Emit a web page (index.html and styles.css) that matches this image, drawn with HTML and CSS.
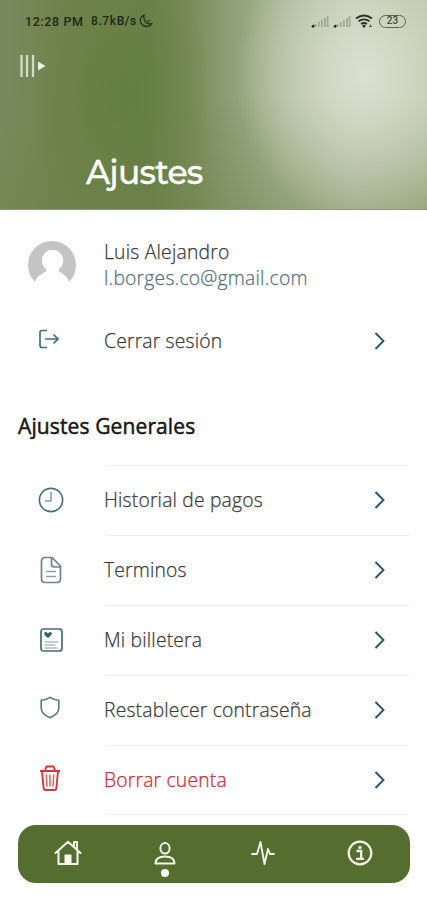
FILE: index.html
```html
<!DOCTYPE html>
<html lang="es">
<head>
<meta charset="utf-8">
<title>Ajustes</title>
<link rel="stylesheet" href="styles.css">
</head>
<body>
<svg width="0" height="0" class="defs">
  <symbol id="chevron" viewBox="0 0 12 18"><path d="M1.5 1l8 8-8 8" fill="none" stroke="#285565" stroke-width="1.9"/></symbol>
  <symbol id="signal" viewBox="0 0 18 13"><path d="M4.7 12V9M7.8 12V7M10.9 12V5M14 12V3M16.6 12V1" fill="none" stroke="#a0ab96" stroke-width="1.8"/><path d="M1 12V11l2-1V12z" fill="#202719" stroke="#202719"/></symbol>
</svg>
<header class="hero">
  <div class="status">
    <span class="time">12:28 PM</span><span class="speed">8.7kB/s</span>
    <svg class="moon" width="14" height="14" viewBox="0 0 14 14"><path d="M5 1C1 3 0 7 3 10.500c3 3 8 2.500 9.500-1C8 11 4 7 5 1z" fill="none" stroke="#23301a" stroke-width="1.300"/><path d="M8 7h3M10 11.500h2.500" stroke="#23301a"/></svg>
    <span class="indicators">
      <svg width="18" height="13"><use href="#signal"/></svg>
      <svg width="18" height="13"><use href="#signal"/></svg>
      <svg width="18" height="14" viewBox="0 0 18 14"><path d="M1 4.500q8-6 16 0M3.500 7.300q5.500-4 11 0M6 10q3-2 6 0" fill="none" stroke="#2b3325" stroke-width="1.800"/><circle cx="9" cy="12" r="1.600" fill="#2b3325"/><path d="M14 12.500h3M15.500 10.500v2" stroke="#59634f"/></svg>
      <span class="battery">23</span>
    </span>
  </div>
  <svg class="menu" width="27" height="24" viewBox="0 0 27 24"><path d="M2.500 1v22M8 1v22M14 1v22" stroke="#d3dcc5" stroke-width="2.300"/><path d="M19 7.500l7.500 4.500-7.500 4.500z" fill="#edf2e4"/></svg>
  <h1>Ajustes</h1>
</header>
<main>
  <section class="profile">
    <svg class="avatar" width="48" height="48" viewBox="0 0 48 48"><circle cx="24" cy="24" r="24" fill="#c4c4c4"/><circle cx="24.500" cy="19.500" r="10.700" fill="#fff"/><path d="M18 26h13v4.500C36 33 40 36 41.500 42.500L48 48H0l6.500-5.500C8 36 13 33 18 30.500z" fill="#fff"/></svg>
    <div class="who"><div class="name">Luis Alejandro</div><div class="mail">l.borges.co@gmail.com</div></div>
  </section>
  <div class="row logout">
    <span class="icon up"><svg class="exit" width="22" height="20" viewBox="0 0 22 20"><path d="M9 1.500H4Q2 1.500 2 3.500v13q0 2 2 2h5M7 10h13M15.500 5.500l4.500 4.500-4.500 4.500" fill="none" stroke="#42717a" stroke-width="1.700"/></svg></span>
    <span class="label">Cerrar sesión</span><svg class="chev" width="12" height="18"><use href="#chevron"/></svg>
  </div>
  <h2>Ajustes Generales</h2>
  <div class="list">
    <div class="row"><span class="icon"><svg width="26" height="26" viewBox="0 0 26 26"><circle cx="13" cy="13" r="11.600" fill="none" stroke="#426c80" stroke-width="1.600"/><path d="M13 5v9H7" fill="none" stroke="#899da5" stroke-width="1.600"/></svg></span><span class="label">Historial de pagos</span><svg class="chev" width="12" height="18"><use href="#chevron"/></svg></div>
    <div class="row"><span class="icon"><svg width="22" height="28" viewBox="0 0 22 28"><path d="M12 1.500H5Q1.500 1.500 1.500 5v18Q1.500 26.500 5 26.500h12q3.500 0 3.500-3.500V10zM11.500 2v6q0 3 3 3h6" fill="none" stroke="#6c8587" stroke-width="1.700"/><path d="M6 15.500h10M6 20.500h10" stroke="#8aa0a2" stroke-width="1.500"/></svg></span><span class="label">Terminos</span><svg class="chev" width="12" height="18"><use href="#chevron"/></svg></div>
    <div class="row"><span class="icon"><svg width="23" height="24" viewBox="0 0 23 24"><rect x="1" y="1" width="21" height="22" rx="2.500" fill="none" stroke="#456b79" stroke-width="1.700"/><path d="M8 10C2 6 4.500 3.500 6.500 4.200L8 5.500l1.500-1.300C11.500 3.500 14 6 8 10z" fill="#376174"/><path d="M4.500 14h14M4.500 17h11M4.500 20h13" stroke="#8797a0" stroke-width="1.200"/></svg></span><span class="label">Mi billetera</span><svg class="chev" width="12" height="18"><use href="#chevron"/></svg></div>
    <div class="row"><span class="icon up"><svg class="shift" width="20" height="23" viewBox="0 0 20 23"><path d="M10 1.300Q14 4 18.800 4.200V12Q18.800 18 10 21.700Q1.200 18 1.200 12V4.200Q6 4 10 1.300z" fill="none" stroke="#557986" stroke-width="1.600"/></svg></span><span class="label">Restablecer contraseña</span><svg class="chev" width="12" height="18"><use href="#chevron"/></svg></div>
    <div class="row danger"><span class="icon up"><svg class="shift" width="22" height="26" viewBox="0 0 22 26"><path d="M1 6h20M6 5.500l1.500-4h7l1.500 4M3 6l1.600 17q.2 2 2 2h8.800q1.800 0 2-2L19 6" fill="none" stroke="#dc3434" stroke-width="1.900"/><path d="M7.300 9.500l.7 12M11 9.500v12M14.700 9.500l-.7 12" stroke="#e25b5b" stroke-width="1.500"/></svg></span><span class="label">Borrar cuenta</span><svg class="chev" width="12" height="18"><use href="#chevron"/></svg></div>
  </div>
</main>
<nav>
  <span class="tab"><svg width="28" height="26" viewBox="0 0 28 26"><path d="M1.500 13L14 1.800 26.500 13M20 6V2h3v7M4.500 12v12h19V12" fill="none" stroke="#f0f5e8" stroke-width="2.100" stroke-linejoin="round" stroke-linecap="round"/><path d="M10.500 14.500h7V24h-7z" fill="#f8faf2"/></svg></span>
  <span class="tab active"><svg width="22" height="23" viewBox="0 0 22 23"><ellipse cx="11" cy="6.300" rx="4.600" ry="5.200" fill="none" stroke="#f0f5e8" stroke-width="2"/><path d="M1.500 21.500Q1.500 14.500 11 14.500t9.500 7z" fill="none" stroke="#f0f5e8" stroke-width="2" stroke-linejoin="round"/></svg><i class="dot"></i></span>
  <span class="tab"><svg width="24" height="26" viewBox="0 0 24 26"><path d="M1 14h5L9.500 2l4 22 3.500-15 2 5h4" fill="none" stroke="#f0f5e8" stroke-width="1.900" stroke-linejoin="round" stroke-linecap="round"/></svg></span>
  <span class="tab"><svg width="26" height="26" viewBox="0 0 26 26"><circle cx="13" cy="13" r="11.300" fill="none" stroke="#f0f5e8" stroke-width="2.200"/><path d="M9.500 11h4.700v7.500M9 18.800h8" fill="none" stroke="#f0f5e8" stroke-width="2.300"/><circle cx="13" cy="7.500" r="1.700" fill="#f0f5e8"/></svg></span>
</nav>
</body>
</html>
```
FILE: styles.css
```css
* { box-sizing: border-box; }
body { margin: 0; width: 427px; height: 900px; overflow: hidden; background: #fff; font-family: "Open Sans", sans-serif; color: #333; }
svg { display: block; flex: none; }
.defs { position: absolute; }
.hero {
  height: 210px; border-bottom: 1px solid #8e9c79;
  background:
    radial-gradient(ellipse 130px 150px at 365px 75px, rgba(222,226,212,.9), rgba(222,226,212,.45) 50%, rgba(222,226,212,0)),
    radial-gradient(ellipse 90px 150px at 120px 95px, rgba(99,127,61,.8), rgba(99,127,61,0)),
    linear-gradient(180deg, rgba(110,130,75,0) 45%, rgba(110,130,75,.42)),
    linear-gradient(90deg, #788b5d 0, #71834f 60px, #6b814a 150px, #7a8e5d 195px, #8da076 230px, #a9b896 285px, #bfc9b1 350px, #b8c4a5 427px);
}
.status { display: flex; align-items: center; height: 42px; padding: 0 21px 0 25px; font: 500 12.5px Roboto, sans-serif; color: #1e2914; }
.time { width: 66px; letter-spacing: .6px; }
.speed { width: 46px; font-size: 12px; letter-spacing: .6px; }
.moon { margin-left: 2px; }
.indicators { display: flex; align-items: center; gap: 4px; margin-left: auto; }
.battery { width: 27px; height: 13px; border: 1.5px solid #59634f; border-radius: 7px; font-size: 10px; line-height: 10px; text-align: center; color: #424c39; margin-left: 2px; }
.menu { margin: 12px 0 0 19px; }
h1 { margin: 70px 0 0 86px; font: 500 33px/48px Montserrat, Nunito, Lato, sans-serif; color: #fff; letter-spacing: -.8px; -webkit-text-stroke: .3px #fff; }
.profile { display: flex; height: 96px; padding: 31px 0 0 28px; }
.who { margin: -2px 0 0 28px; font-size: 19.3px; font-weight: 300; line-height: 26px; letter-spacing: .22px; -webkit-text-stroke: .25px; }
.name, .mail { white-space: nowrap; }
.name { color: #3a3a3a; }
.mail { color: #56737b; }
.row { display: flex; align-items: center; height: 70px; }
.icon { width: 102px; height: 28px; display: flex; align-items: center; justify-content: center; margin-right: 2px; flex: none; }
.up { padding-bottom: 4px; }
.exit { margin-right: 4px; }
.shift { margin-right: 2px; }
.label { flex: 1; font-size: 19.3px; line-height: 26px; white-space: nowrap; color: #3a3a3a; font-weight: 300; letter-spacing: .19px; -webkit-text-stroke: .25px; }
.chev { margin-right: 41px; }
h2 { margin: 36px 0 0 18px; font-size: 21px; font-weight: 400; line-height: 28px; color: #161616; letter-spacing: .12px; -webkit-text-stroke: .5px; }
.list { margin-top: 25px; }
.list .row { background: linear-gradient(#efefef, #efefef) 105px 0 / 304px 1px no-repeat; padding-bottom: 1px; }
.list .row:last-child { background: linear-gradient(#efefef, #efefef) 105px 0 / 304px 1px no-repeat, linear-gradient(#efefef, #efefef) 105px 100% / 304px 1px no-repeat; }
.danger .label { color: #da262d; }
nav { display: flex; width: 392px; height: 58px; margin: 10px 0 0 18px; padding: 0 1px; border-radius: 18px; background: #556d2e; }
.tab { flex: 1; display: flex; align-items: center; justify-content: center; position: relative; padding-bottom: 2px; }
.dot { position: absolute; width: 8px; height: 8px; border-radius: 50%; background: #fff; bottom: 6px; left: calc(50% - 4px); }
```
